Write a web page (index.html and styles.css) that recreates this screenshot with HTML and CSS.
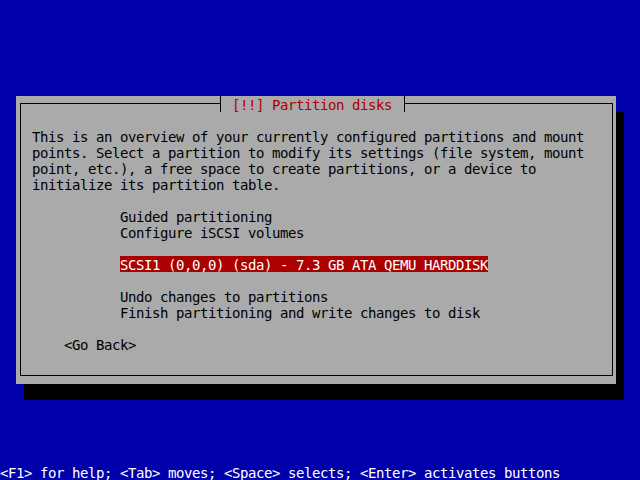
FILE: index.html
```html
<!DOCTYPE html>
<html lang="en">
  <head>
    <meta charset="UTF-8" />
    <title>Partition disks</title>
    <link rel="stylesheet" href="styles.css">
  </head>
  <body>
    <div class="screen">
      <div class="dialog">
        <div class="title">[!!] Partition disks</div>
        <div class="frame">
          <div class="intro">
            <div class="line">This is an overview of your currently configured partitions and mount</div>
            <div class="line">points. Select a partition to modify its settings (file system, mount</div>
            <div class="line">point, etc.), a free space to create partitions, or a device to</div>
            <div class="line">initialize its partition table.</div>
          </div>

          <div class="menu">
            <div class="line">Guided partitioning</div>
            <div class="line">Configure iSCSI volumes</div>
            <div class="line"></div>
            <div class="line"><span class="selected">SCSI1 (0,0,0) (sda) - 7.3 GB ATA QEMU HARDDISK</span></div>
            <div class="line"></div>
            <div class="line">Undo changes to partitions</div>
            <div class="line">Finish partitioning and write changes to disk</div>
          </div>

          <div class="buttons">
            <div class="line">&lt;Go Back&gt;</div>
          </div>
        </div>
      </div>

      <div class="help">&lt;F1&gt; for help; &lt;Tab&gt; moves; &lt;Space&gt; selects; &lt;Enter&gt; activates buttons</div>
    </div>
  </body>
</html>
```

FILE: styles.css
```css
:root {
  --blue: #0000aa;
  --grey: #aaaaaa;
  --red: #aa0000;
  --black: #000000;
  --white: #ffffff;
}

html,
body {
  margin: 0;
  padding: 0;
}

body {
  background: var(--blue);
  font-family: "DejaVu Sans Mono", "Liberation Mono", monospace;
  font-size: 14px;
  letter-spacing: -0.43px;
  line-height: 18px;
  color: var(--black);
}

.screen {
  width: 640px;
  height: 480px;
  display: flex;
  flex-direction: column;
  overflow: hidden;
}

.dialog {
  position: relative;
  box-sizing: border-box;
  width: 600px;
  height: 288px;
  margin: 96px 0 0 16px;
  padding: 7px 3px 8px 4px;
  background: var(--grey);
  box-shadow: 8px 16px 0 var(--black);
}

.frame {
  box-sizing: border-box;
  height: 100%;
  border: 1px solid var(--black);
  padding: 24px 0 0 11px;
}

/* title sits on top of the frame line */
.title {
  position: absolute;
  top: 0;
  left: 204px;
  height: 16px;
  overflow: hidden;
  padding: 0 12px 0 11px;
  border-left: 1px solid var(--black);
  border-right: 1px solid var(--black);
  background: var(--grey);
  color: var(--red);
  white-space: pre;
}

.line {
  height: 16px;
  white-space: pre;
}

.intro {
  margin-bottom: 16px;
}

.menu {
  margin-left: 88px;
  margin-bottom: 16px;
}

.selected {
  display: inline-block;
  height: 16px;
  vertical-align: top;
  background: var(--red);
  color: var(--white);
}

.buttons {
  margin-left: 32px;
}

.help {
  margin-top: auto;
  height: 16px;
  white-space: pre;
  color: var(--white);
}
```
